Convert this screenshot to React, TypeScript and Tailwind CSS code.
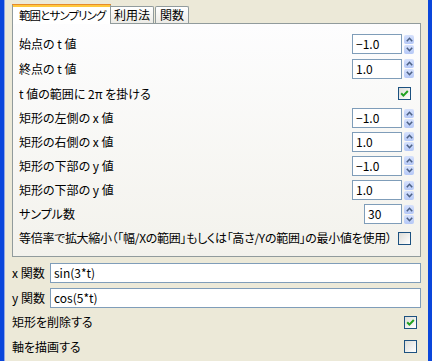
import React from "react";

const FONT = "[font-family:'Noto_Sans_CJK_JP','Noto_Sans',sans-serif] [font-feature-settings:'palt']";

function Spinner({ value, wide }: { value: string; wide: boolean }) {
  return (
    <div className="flex items-center">
      <div
        className={`${wide ? "w-[50px]" : "w-[38px]"} h-[20px] border border-[#7F9DB9] bg-white flex items-center pl-[3px] text-[12px] leading-none text-black`}
      >
        {value}
      </div>
      <div className="ml-[2px] flex flex-col gap-[1px] w-[10px]">
        <div className="h-[9px] rounded-[2px] bg-gradient-to-b from-[#D6E1FC] to-[#B5C8F7] flex items-center justify-center">
          <svg width="7" height="5" viewBox="0 0 7 5">
            <polyline points="0.8,4.2 3.5,1.3 6.2,4.2" fill="none" stroke="#4D6185" strokeWidth="1.6" />
          </svg>
        </div>
        <div className="h-[9px] rounded-[2px] bg-gradient-to-b from-[#D6E1FC] to-[#B5C8F7] flex items-center justify-center">
          <svg width="7" height="5" viewBox="0 0 7 5">
            <polyline points="0.8,0.8 3.5,3.7 6.2,0.8" fill="none" stroke="#4D6185" strokeWidth="1.6" />
          </svg>
        </div>
      </div>
    </div>
  );
}

function Check({ checked }: { checked: boolean }) {
  return (
    <div className="w-[13px] h-[13px] border border-[#1C5180] bg-gradient-to-br from-[#DCDCD7] to-[#FFFFFF] flex items-center justify-center">
      {checked && (
        <svg width="9" height="9" viewBox="0 0 9 9">
          <polyline points="1.2,4.2 3.4,6.6 7.8,2" fill="none" stroke="#21A121" strokeWidth="2" />
        </svg>
      )}
    </div>
  );
}

type Row =
  | { label: string; kind: "spin"; value: string; wide: boolean; h: string }
  | { label: string; kind: "check"; checked: boolean; h: string };

const rows: Row[] = [
  { label: "始点の t 値", kind: "spin", value: "−1.0", wide: true, h: "h-[24px]" },
  { label: "終点の t 値", kind: "spin", value: "1.0", wide: true, h: "h-[25px]" },
  { label: "t 値の範囲に 2π を掛ける", kind: "check", checked: true, h: "h-[25px]" },
  { label: "矩形の左側の x 値", kind: "spin", value: "−1.0", wide: true, h: "h-[24px]" },
  { label: "矩形の右側の x 値", kind: "spin", value: "1.0", wide: true, h: "h-[23px]" },
  { label: "矩形の下部の y 値", kind: "spin", value: "−1.0", wide: true, h: "h-[25px]" },
  { label: "矩形の下部の y 値", kind: "spin", value: "1.0", wide: true, h: "h-[24px]" },
  { label: "サンプル数", kind: "spin", value: "30", wide: false, h: "h-[24px]" },
  {
    label: "等倍率で拡大縮小（「幅/Xの範囲」もしくは「高さ/Yの範囲」の最小値を使用）",
    kind: "check",
    checked: false,
    h: "h-[24px]",
  },
];

export default function App() {
  return (
    <div className={`w-[432px] h-[361px] flex bg-[#ECE9D8] text-[12px] text-black overflow-hidden ${FONT}`}>
      <div className="w-[4px] bg-[#0A46DB]" />
      <div className="w-[1px] bg-[#8FA6E4]" />
      <div className="flex-1 flex flex-col pl-[7px] pr-[7px]">
        {/* Tabs */}
        <div className="pt-[4px] flex items-end h-[23px]">
          <div className="relative z-10 -mb-[1px] w-[99px] h-[20px] bg-white border-l border-r border-[#919B9C] flex flex-col">
            <div className="h-[1px] bg-[#E68B2C] -mx-[1px]" />
            <div className="h-[2px] bg-[#FFC83C]" />
            <div className="flex-1 flex items-center pl-[6px] leading-none whitespace-nowrap text-[11.5px] tracking-[-0.9px]">
              範囲とサンプリング
            </div>
          </div>
          <div className="w-[43px] h-[17px] border-t border-r border-[#919B9C] rounded-tr-[2px] bg-gradient-to-b from-[#FFFFFF] to-[#ECEBE6] flex items-center justify-center leading-none whitespace-nowrap">
            利用法
          </div>
          <div className="ml-[1px] w-[34px] h-[17px] border-t border-l border-r border-[#919B9C] rounded-t-[2px] bg-gradient-to-b from-[#FFFFFF] to-[#ECEBE6] flex items-center justify-center leading-none whitespace-nowrap">
            関数
          </div>
        </div>
        {/* Panel */}
        <div className="h-[234px] border border-[#919B9C] bg-gradient-to-b from-[#FDFDFE] to-[#F3F2EC] pt-[8px] pl-[6px] pr-[6px] flex flex-col">
          {rows.map((r, i) => (
            <div key={i} className={`${r.h} flex items-center justify-between`}>
              <span className={`leading-none whitespace-nowrap ${i === 8 ? "tracking-[-0.3px]" : ""}`}>{r.label}</span>
              {r.kind === "spin" ? (
                <Spinner value={r.value} wide={r.wide} />
              ) : (
                <div className="mr-[3px]">
                  <Check checked={r.checked} />
                </div>
              )}
            </div>
          ))}
        </div>
        {/* Bottom */}
        <div className="pt-[3px] flex flex-col">
          <div className="h-[25px] flex items-center">
            <span className="w-[38px] leading-none whitespace-nowrap">x 関数</span>
            <div className="flex-1 h-[20px] border border-[#7F9DB9] bg-white flex items-center pl-[3px] leading-none">
              sin(3*t)
            </div>
          </div>
          <div className="h-[25px] flex items-center">
            <span className="w-[38px] leading-none whitespace-nowrap">y 関数</span>
            <div className="flex-1 h-[20px] border border-[#7F9DB9] bg-white flex items-center pl-[3px] leading-none">
              cos(5*t)
            </div>
          </div>
          <div className="h-[24px] flex items-center justify-between">
            <span className="leading-none whitespace-nowrap">矩形を削除する</span>
            <div className="mr-[4px]">
              <Check checked={true} />
            </div>
          </div>
          <div className="h-[25px] flex items-center justify-between">
            <span className="leading-none whitespace-nowrap">軸を描画する</span>
            <div className="mr-[4px]">
              <Check checked={false} />
            </div>
          </div>
        </div>
      </div>
      <div className="w-[4px] bg-[#0A46DB]" />
    </div>
  );
}
